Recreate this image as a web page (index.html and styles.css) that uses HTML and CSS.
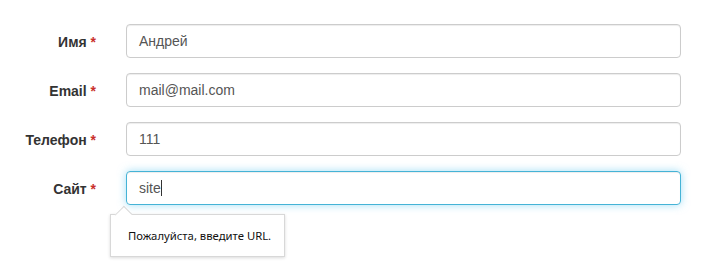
FILE: index.html
```html
<!DOCTYPE html>
<html lang="ru">
<head>
    <meta charset="UTF-8">
    <title>Форма</title>
    <link rel="stylesheet" href="styles.css">
</head>
<body>
    <form class="form-horizontal">
        <div class="form-group">
            <label class="control-label">Имя <span class="req">*</span></label>
            <div class="field"><div class="form-control">Андрей</div></div>
        </div>
        <div class="form-group">
            <label class="control-label">Email <span class="req">*</span></label>
            <div class="field"><div class="form-control">mail@mail.com</div></div>
        </div>
        <div class="form-group">
            <label class="control-label">Телефон <span class="req">*</span></label>
            <div class="field"><div class="form-control">111</div></div>
        </div>
        <div class="form-group">
            <label class="control-label">Сайт <span class="req">*</span></label>
            <div class="field">
                <div class="form-control focus">site<span class="caret"></span></div>
                <div class="bubble">
                    <span class="bubble-arrow"></span>
                    Пожалуйста, введите URL.
                </div>
            </div>
        </div>
    </form>
</body>
</html>
```

FILE: styles.css
```css
body {
    margin: 0;
    min-height: 279px;
    background: #fff;
    font-family: 'Liberation Sans', Arial, sans-serif;
    font-size: 14px;
    color: #333;
}
.form-horizontal {
    padding: 24px 24px 60px 0;
}
.form-group {
    display: grid;
    grid-template-columns: 96px 1fr;
    column-gap: 30px;
    margin-bottom: 15px;
}
.control-label {
    text-align: right;
    font-weight: bold;
    padding-top: 10px;
    line-height: 16px;
    color: #333;
}
.req {
    color: #c9302c;
}
.field {
    position: relative;
}
.form-control {
    box-sizing: border-box;
    height: 34px;
    padding: 8px 12px;
    line-height: 16px;
    font-size: 14px;
    color: #555;
    border: 1px solid #ccc;
    border-radius: 4px;
    box-shadow: inset 0 1px 1px rgba(0, 0, 0, 0.075);
}
.form-control.focus {
    border-color: #45b3d6;
    box-shadow: inset 0 1px 1px rgba(0, 0, 0, 0.075), 0 0 8px rgba(102, 200, 240, 0.6);
}
.caret {
    display: inline-block;
    width: 1px;
    height: 16px;
    background: #333;
    vertical-align: top;
}
.bubble {
    position: absolute;
    left: -16px;
    top: 43px;
    box-sizing: border-box;
    width: 175px;
    height: 43px;
    padding: 13px 0 0 17px;
    background: #fff;
    border: 1px solid #d8d8d8;
    box-shadow: 0 1px 3px rgba(0, 0, 0, 0.15);
    font-family: 'Noto Sans', sans-serif;
    font-size: 11.3px;
    line-height: 16px;
    color: #111;
}
.bubble-arrow {
    position: absolute;
    left: 6px;
    top: -7px;
    width: 12px;
    height: 12px;
    background: #fff;
    border-left: 1px solid #d8d8d8;
    border-top: 1px solid #d8d8d8;
    transform: rotate(45deg) scaleX(0.9);
}
```
